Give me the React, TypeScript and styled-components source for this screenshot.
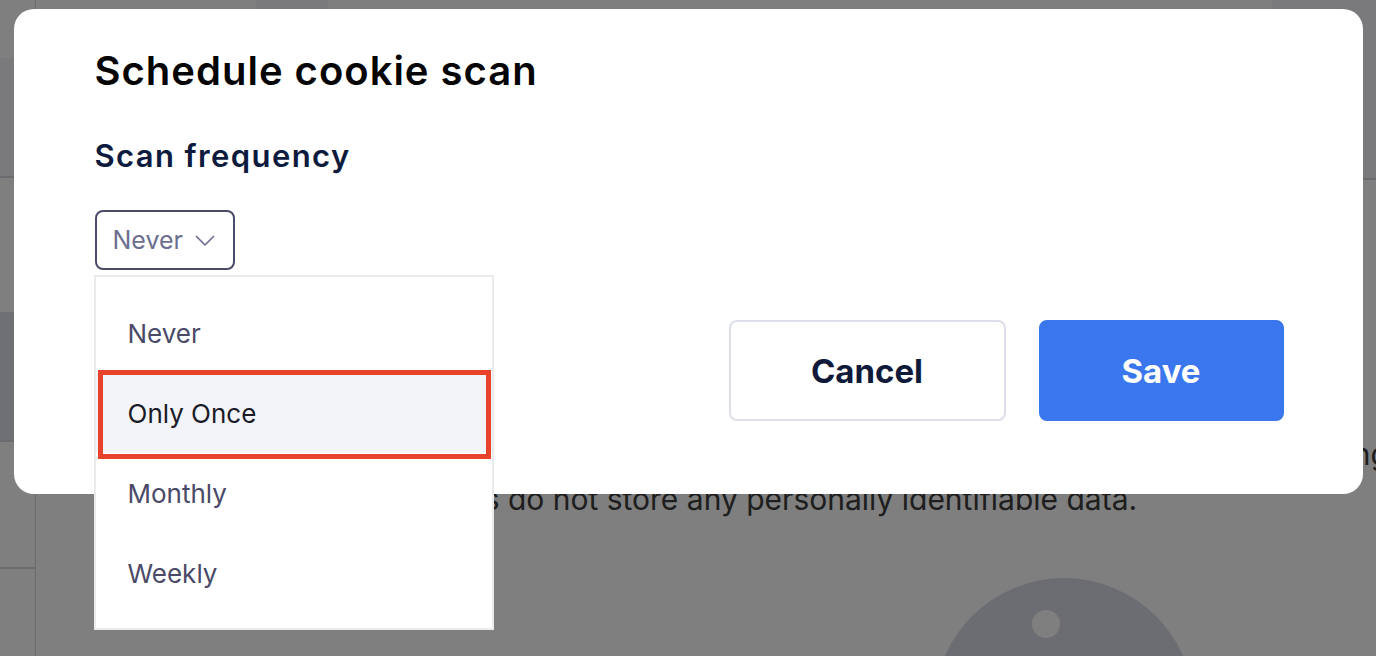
import React from "react";
import styled, { createGlobalStyle } from "styled-components";

const GlobalStyle = createGlobalStyle`
  html, body {
    margin: 0;
    padding: 0;
    width: 1376px;
    height: 656px;
    overflow: hidden;
    font-family: Inter, "Noto Sans", sans-serif;
  }
  * {
    box-sizing: border-box;
  }
`;

const options = ["Never", "Only Once", "Monthly", "Weekly"];

const Chevron = () => (
  <svg width="20" height="12" viewBox="0 0 20 12" fill="none">
    <polyline
      points="1.5,1.5 10,10 18.5,1.5"
      stroke="currentColor"
      strokeWidth="1.7"
      strokeLinecap="round"
      strokeLinejoin="round"
    />
  </svg>
);

export default function App() {
  return (
    <>
      <GlobalStyle />
      <PageBehind>
        <Sidebar>
          <SideCell $h={58} />
          <SideCell $h={120} $tone="#f4f4f8" $line />
          <SideCell $h={134} />
          <SideCell $h={130} $tone="#dee0e8" $line />
          <SideCell $h={127} $line />
          <SideCell $h={87} />
        </Sidebar>
        <Main>
          <TopBar>
            <TopTab />
            <TopSpacer />
            <TopPanel />
          </TopBar>
          <Content>
            <TextLine $end>
              We use cookies to understand how visitors interact with our website and to improve their browsing
            </TextLine>
            <TextLine>
              These cookies do not store any personally identifiable data.
            </TextLine>
            <Illustration>
              <IllustrationDot />
            </Illustration>
          </Content>
        </Main>
      </PageBehind>

      <Overlay>
        <Modal>
          <Title>Schedule cookie scan</Title>
          <SectionLabel>Scan frequency</SectionLabel>
          <SelectWrap>
            <SelectButton>
              <span>Never</span>
              <Chevron />
            </SelectButton>
            <Dropdown>
              {options.map((opt) => (
                <Option key={opt} $active={opt === "Only Once"}>
                  {opt}
                </Option>
              ))}
            </Dropdown>
          </SelectWrap>
          <Footer>
            <Button $variant="ghost">Cancel</Button>
            <Button $variant="primary">Save</Button>
          </Footer>
        </Modal>
      </Overlay>
    </>
  );
}

/* ---------- page behind the dialog ---------- */

const PageBehind = styled.div`
  width: 1376px;
  height: 656px;
  display: flex;
  background: #ffffff;
  overflow: hidden;
`;

const Sidebar = styled.div`
  width: 36px;
  flex-shrink: 0;
  display: flex;
  flex-direction: column;
  border-right: 1px solid #d8d8e0;
`;

const SideCell = styled.div<{ $h: number; $tone?: string; $line?: boolean }>`
  height: ${({ $h }) => $h}px;
  flex-shrink: 0;
  background: ${({ $tone }) => $tone || "#ffffff"};
  border-bottom: ${({ $line }) => ($line ? "2px solid #d8d8e0" : "none")};
`;

const Main = styled.div`
  flex: 1;
  display: flex;
  flex-direction: column;
  min-width: 0;
`;

const TopBar = styled.div`
  height: 180px;
  flex-shrink: 0;
  display: flex;
  border-bottom: 2px solid #d8d8e0;
`;

const TopTab = styled.div`
  width: 72px;
  height: 9px;
  margin-left: 220px;
  background: #f4f4f8;
`;

const TopSpacer = styled.div`
  flex: 1;
`;

const TopPanel = styled.div`
  width: 104px;
  background: #f4f4f8;
`;

const Content = styled.div`
  position: relative;
  flex: 1;
  padding: 252px 0 0 257px;
  overflow: hidden;
`;

const TextLine = styled.div<{ $end?: boolean }>`
  font-family: Inter, "Noto Sans", sans-serif;
  font-size: 30px;
  line-height: 45px;
  color: #3c3c3c;
  white-space: nowrap;
  display: flex;
  justify-content: ${({ $end }) => ($end ? "flex-end" : "flex-start")};
  margin-right: ${({ $end }) => ($end ? "-13px" : "0")};
`;

const Illustration = styled.div`
  position: absolute;
  left: 898px;
  top: 398px;
  width: 260px;
  height: 260px;
  border-radius: 50%;
  background: #d8dae4;
`;

const IllustrationDot = styled.div`
  position: absolute;
  left: 98px;
  top: 32px;
  width: 28px;
  height: 28px;
  border-radius: 50%;
  background: #ffffff;
`;

/* ---------- dialog ---------- */

const Overlay = styled.div`
  position: fixed;
  inset: 0;
  background: rgba(0, 0, 0, 0.5);
  display: flex;
  justify-content: center;
  align-items: flex-start;
  padding-top: 9px;
`;

const Modal = styled.div`
  width: 1349px;
  height: 485px;
  background: #ffffff;
  border-radius: 20px;
  padding: 38px 79px 0 81px;
  display: flex;
  flex-direction: column;
`;

const Title = styled.h2`
  margin: 0;
  font-family: Inter, "Noto Sans", sans-serif;
  font-size: 40px;
  line-height: 48px;
  font-weight: 600;
  letter-spacing: 1px;
  color: #050505;
`;

const SectionLabel = styled.h3`
  margin: 43px 0 0;
  font-family: Inter, "Noto Sans", sans-serif;
  font-size: 31px;
  line-height: 36px;
  font-weight: 600;
  letter-spacing: 1.4px;
  color: #0d1b3e;
`;

const SelectWrap = styled.div`
  position: relative;
  margin-top: 36px;
  align-self: flex-start;
`;

const SelectButton = styled.button`
  height: 60px;
  width: 140px;
  padding: 0 0 0 16px;
  display: flex;
  align-items: center;
  gap: 12px;
  background: #ffffff;
  border: 2px solid #4b4b6a;
  border-radius: 8px;
  font-family: Inter, "Noto Sans", sans-serif;
  font-size: 25px;
  color: #6d6f90;
  svg {
    color: #6d6f90;
    margin-top: 1px;
  }
`;

const Dropdown = styled.div`
  position: absolute;
  left: -1px;
  top: 65px;
  width: 400px;
  height: 355px;
  background: #ffffff;
  border: 2px solid #ebebeb;
  padding: 16px 0 0;
  z-index: 10;
`;

const Option = styled.div<{ $active?: boolean }>`
  position: relative;
  z-index: ${({ $active }) => ($active ? 1 : 0)};
  height: 80px;
  display: flex;
  align-items: center;
  padding-left: 32px;
  font-family: Inter, "Noto Sans", sans-serif;
  font-size: 26px;
  color: ${({ $active }) => ($active ? "#1b1b27" : "#4a4a68")};
  background: ${({ $active }) => ($active ? "#f3f4f9" : "#ffffff")};

  &::after {
    content: "";
    display: ${({ $active }) => ($active ? "block" : "none")};
    position: absolute;
    top: -3px;
    bottom: -6px;
    left: 2px;
    right: 1px;
    border: 5px solid #e8432a;
  }
`;

const Footer = styled.div`
  margin-top: 50px;
  display: flex;
  justify-content: flex-end;
  gap: 33px;
`;

const Button = styled.button<{ $variant: "ghost" | "primary" }>`
  height: 101px;
  width: ${({ $variant }) => ($variant === "ghost" ? "277px" : "245px")};
  border-radius: 8px;
  font-family: Inter, "Noto Sans", sans-serif;
  font-size: 33px;
  font-weight: 700;
  cursor: pointer;
  border: 2px solid
    ${({ $variant }) => ($variant === "ghost" ? "#dcdfea" : "#3a77ee")};
  background: ${({ $variant }) => ($variant === "ghost" ? "#ffffff" : "#3a77ee")};
  color: ${({ $variant }) => ($variant === "ghost" ? "#0f1a3a" : "#ffffff")};
`;
